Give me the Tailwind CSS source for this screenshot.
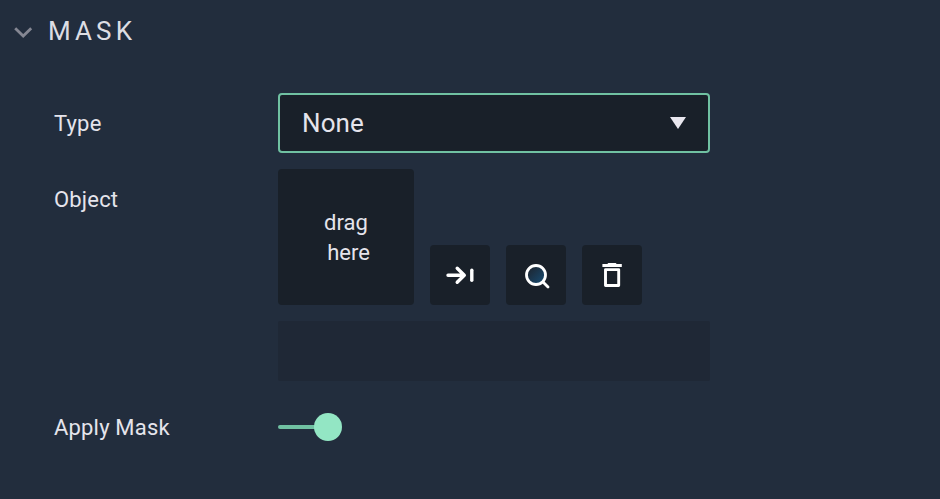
<!DOCTYPE html>
<html lang="en">
<head>
<meta charset="utf-8">
<title>Mask</title>
<script src="https://cdn.jsdelivr.net/npm/@tailwindcss/browser@4"></script>
</head>
<body class="h-screen overflow-hidden bg-[#222d3d] font-[Roboto,sans-serif] text-[22px] leading-[30px] text-[#e5e4ec]">
  <header class="flex h-[62px] items-center pl-[14px]">
    <svg class="mt-[3px] h-[12px] w-[19px]" viewBox="0 0 19 12" fill="none" stroke="#858793" stroke-width="2.8"><path d="M1.2 1.2 9.2 9 17.2 1.2"/></svg>
    <h2 class="ml-[15px] text-[26px] tracking-[4.1px] text-[#dddde3]">MASK</h2>
  </header>
  <main class="grid grid-cols-[224px_432px] gap-y-4 pt-[31px] pl-[54px]">
    <div class="flex h-[60px] items-center pt-[2px] tracking-[0.18px]">Type</div>
    <div class="flex h-[60px] items-center justify-between rounded-[4px] border-2 border-[#70c1a2] bg-[#192029] pr-[22px] pl-[22px] text-[26px]">
      <span class="tracking-[0.1px]">None</span>
      <svg class="h-[12px] w-[16px]" viewBox="0 0 16 12" fill="#e9e7ef"><path d="M0 0H16L8 12Z"/></svg>
    </div>
    <div class="flex h-[60px] items-center pt-[2px] tracking-[0.18px]">Object</div>
    <div>
      <div class="flex items-end gap-4">
        <div class="flex h-[136px] w-[136px] flex-col items-center justify-center rounded-[4px] bg-[#192029] pt-[2px]">
          <span>drag</span><span class="pl-[5px]">here</span>
        </div>
        <button class="flex h-[60px] w-[60px] items-center justify-center rounded-[4px] bg-[#192029]">
          <svg class="h-[60px] w-[60px]" viewBox="0 0 60 60" fill="none" stroke="#fff" stroke-width="3.4" stroke-linecap="round" stroke-linejoin="round"><path d="M18 30.2H34M27.2 23.2 34.3 30.2 27.2 37.2"/><path d="M41.8 25.2V35.2"/></svg>
        </button>
        <button class="flex h-[60px] w-[60px] items-center justify-center rounded-[4px] bg-[#192029]">
          <svg class="h-[60px] w-[60px]" viewBox="0 0 60 60" fill="none" stroke="#fff" stroke-width="2.8" stroke-linecap="round">
            <defs><linearGradient id="lens" x1="0" y1="0" x2="1" y2="1"><stop offset=".15" stop-color="#1d2733"/><stop offset="1" stop-color="#174f78"/></linearGradient></defs>
            <circle cx="30" cy="30" r="9.5" fill="url(#lens)"/><path d="M37 37 42 42"/>
          </svg>
        </button>
        <button class="flex h-[60px] w-[60px] items-center justify-center rounded-[4px] bg-[#192029]">
          <svg class="h-[60px] w-[60px]" viewBox="0 0 60 60"><path d="M26.3 17.9H33.7L34.7 19H39.8V22H20.4V19H25.3Z" fill="#fff"/><path d="M23.5 24.6H36.7V40.5H23.5Z" fill="none" stroke="#fff" stroke-width="2.9" stroke-linejoin="round"/></svg>
        </button>
      </div>
      <div class="mt-4 h-[60px] rounded-[2px] bg-[#1f2836]"></div>
    </div>
    <div class="flex h-[60px] items-center pt-[2px] tracking-[0.18px]">Apply Mask</div>
    <div class="flex h-[60px] items-center">
      <div class="h-1 w-[40px] rounded-l-full bg-[#70c1a2]"></div>
      <div class="-ml-1 h-7 w-7 rounded-full bg-[#93e6c4]"></div>
    </div>
  </main>
</body>
</html>
